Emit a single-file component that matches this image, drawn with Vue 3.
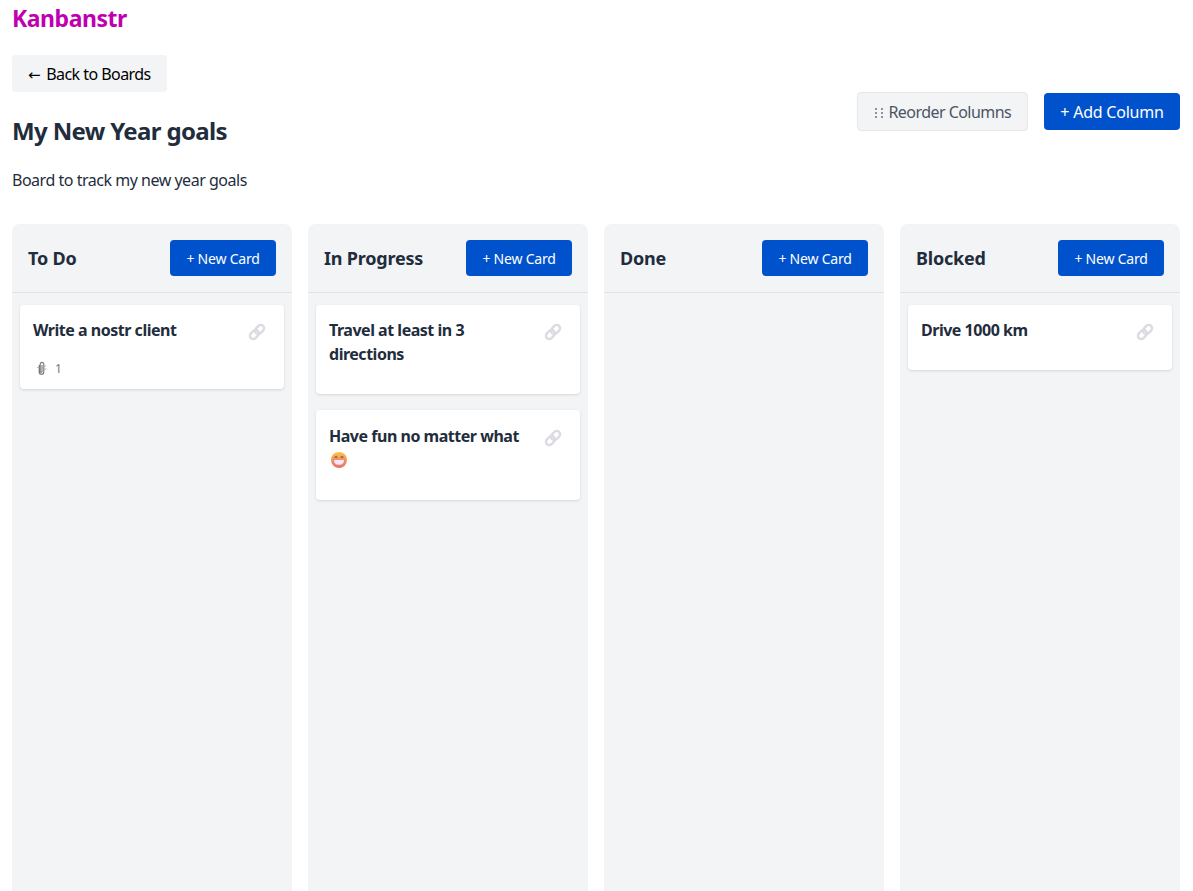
<template>
  <div class="page">
    <h1 class="brand">Kanbanstr</h1>
    <a class="back_btn"><span class="arrow">←</span> Back to Boards</a>
    <div class="board_head">
      <div class="board_info">
        <h2 class="board_title">{{ board.title }}</h2>
        <p class="board_desc">{{ board.description }}</p>
      </div>
      <div class="board_actions">
        <button class="reorder_btn">
          <svg class="dots" width="10" height="12" viewBox="0 0 10 12">
            <g fill="#6b7280">
              <circle cx="2" cy="2" r="1" /><circle cx="8" cy="2" r="1" />
              <circle cx="2" cy="6" r="1" /><circle cx="8" cy="6" r="1" />
              <circle cx="2" cy="10" r="1" /><circle cx="8" cy="10" r="1" />
            </g>
          </svg>
          Reorder Columns
        </button>
        <button class="add_btn">+ Add Column</button>
      </div>
    </div>
    <div class="columns">
      <section class="column" v-for="col in board.columns" :key="col.name">
        <header class="column_head">
          <h3 class="column_name">{{ col.name }}</h3>
          <button class="new_btn">+ New Card</button>
        </header>
        <div class="card_list">
          <article class="card" :class="{ card_emoji: card.emoji }" v-for="card in col.cards" :key="card.title">
            <div class="card_top">
              <div class="card_title">
                {{ card.title }}
                <svg v-if="card.emoji" class="emoji" width="18" height="18" viewBox="0 0 18 18">
                  <defs>
                    <linearGradient id="face" x1="0" y1="0" x2="0" y2="1">
                      <stop offset="0" stop-color="#fbc24a" />
                      <stop offset="1" stop-color="#ee6f5c" />
                    </linearGradient>
                  </defs>
                  <circle cx="9" cy="9" r="8" fill="url(#face)" />
                  <path d="M4.6 6.6q1.4-1.6 2.8 0M10.6 6.6q1.4-1.6 2.8 0" fill="none" stroke="#8a4a2a" stroke-width="1.1" />
                  <path d="M3.4 8.4h11.2q0 5.8-5.6 5.8t-5.6-5.8z" fill="#f6e6f6" stroke="#c9567a" stroke-width=".5" />
                </svg>
              </div>
              <svg class="link_icon" width="18" height="18" viewBox="0 0 18 18" fill="none" stroke="#dcdae2" stroke-width="2.4">
                <g transform="rotate(-45 9 9)">
                  <rect x="0.4" y="5.7" width="10" height="6.6" rx="3.3" />
                  <rect x="7.6" y="5.7" width="10" height="6.6" rx="3.3" />
                </g>
              </svg>
            </div>
            <div class="card_meta" v-if="card.attachments">
              <svg width="11" height="15" viewBox="0 0 11 15" fill="none" stroke="#777" stroke-width="1.1">
                <path d="M3.2 4v7a2.3 2.3 0 0 0 4.6 0V3.2a1.8 1.8 0 0 0-3.6 0v7.3a.9.9 0 0 0 1.8 0V4" />
                <path d="M8 5h2.2M1 6.5h2.2M8 8h2.2" stroke="#b5b5b5" />
              </svg>
              <span>{{ card.attachments }}</span>
            </div>
          </article>
        </div>
      </section>
    </div>
  </div>
</template>

<script setup>
const board = {
  title: 'My New Year goals',
  description: 'Board to track my new year goals',
  columns: [
    { name: 'To Do', cards: [{ title: 'Write a nostr client', attachments: 1 }] },
    {
      name: 'In Progress',
      cards: [
        { title: 'Travel at least in 3 directions' },
        { title: 'Have fun no matter what', emoji: true }
      ]
    },
    { name: 'Done', cards: [] },
    { name: 'Blocked', cards: [{ title: 'Drive 1000 km' }] }
  ]
}
</script>

<style>
html, body {
  margin: 0;
  background: #fff;
  overflow: hidden;
}
</style>

<style scoped>
.page {
  height: 891px;
  box-sizing: border-box;
  padding: 0 13px 0 12px;
  font-family: "Noto Sans", "Open Sans", sans-serif;
  color: #1f2d3d;
  overflow: hidden;
}
.brand {
  margin: 0;
  height: 37px;
  font-size: 23px;
  line-height: 36px;
  font-weight: 700;
  color: #c000b0;
  letter-spacing: -0.47px;
}
.back_btn {
  display: block;
  width: 155px;
  margin-top: 18px;
  height: 37px;
  line-height: 39px;
  padding: 0 0 0 16px;
  border-radius: 4px;
  background: #f3f4f6;
  color: #000;
  font-size: 16px;
  letter-spacing: -0.55px;
  box-sizing: border-box;
  white-space: nowrap;
}
.arrow {
  font-family: "DejaVu Sans", sans-serif;
  font-size: 15px;
  letter-spacing: 0;
  margin-right: 2px;
}
.board_head {
  display: flex;
  justify-content: space-between;
  align-items: flex-start;
}
.board_title {
  margin: 19px 0 0;
  font-size: 24px;
  line-height: 40px;
  font-weight: 700;
  letter-spacing: -0.65px;
}
.board_desc {
  margin: 15px 0 1px;
  font-size: 16px;
  line-height: 28px;
  letter-spacing: -0.48px;
}
.board_actions {
  display: flex;
  gap: 16px;
  align-items: center;
  height: 39px;
}
.reorder_btn, .add_btn, .new_btn {
  font-family: inherit;
  border-radius: 4px;
  cursor: pointer;
  box-sizing: border-box;
  white-space: nowrap;
}
.reorder_btn {
  height: 39px;
  width: 171px;
  padding: 0;
  background: #f3f4f6;
  border: 1px solid #e5e7eb;
  color: #4b5563;
  font-size: 16px;
  letter-spacing: -0.55px;
}
.dots {
  vertical-align: -1px;
  margin-right: 1px;
}
.add_btn {
  height: 37px;
  width: 136px;
  padding: 0;
  background: #0052cc;
  border: 0;
  color: #fff;
  font-size: 16px;
  letter-spacing: -0.22px;
}
.columns {
  display: grid;
  grid-template-columns: repeat(4, 280px);
  gap: 16px;
  margin-top: 29px;
}
.column {
  height: 680px;
  background: #f3f4f6;
  border-radius: 8px;
}
.column_head {
  display: flex;
  justify-content: space-between;
  align-items: center;
  height: 69px;
  box-sizing: border-box;
  padding: 0 16px 1px;
  border-bottom: 1px solid #e0e2e6;
}
.column_name {
  margin: 0;
  font-size: 18px;
  font-weight: 700;
  letter-spacing: -0.2px;
}
.new_btn {
  width: 106px;
  height: 36px;
  padding: 2px 0 0;
  background: #0052cc;
  border: 0;
  color: #fff;
  font-size: 14px;
  letter-spacing: -0.22px;
}
.card_list {
  display: flex;
  flex-direction: column;
  gap: 16px;
  padding: 12px 8px;
}
.card {
  background: #fff;
  border-radius: 4px;
  padding: 13px 13px 12px;
  box-shadow: 0 1px 3px rgba(0, 0, 0, 0.12);
}
.card_emoji {
  padding-top: 14px;
}
.card_top {
  display: flex;
  justify-content: space-between;
  align-items: flex-start;
  gap: 16px;
  margin-bottom: 16px;
}
.card_title {
  font-size: 16px;
  line-height: 24px;
  font-weight: 700;
  letter-spacing: -0.48px;
}
.emoji {
  display: block;
  margin: 3px 0 3px 1px;
}
.link_icon {
  flex: none;
  margin: 5px 5px 0 0;
}
.card_meta {
  display: flex;
  align-items: center;
  gap: 8px;
  margin-left: 3px;
  padding-top: 1px;
  height: 18px;
  font-size: 12px;
  color: #777;
}
</style>
